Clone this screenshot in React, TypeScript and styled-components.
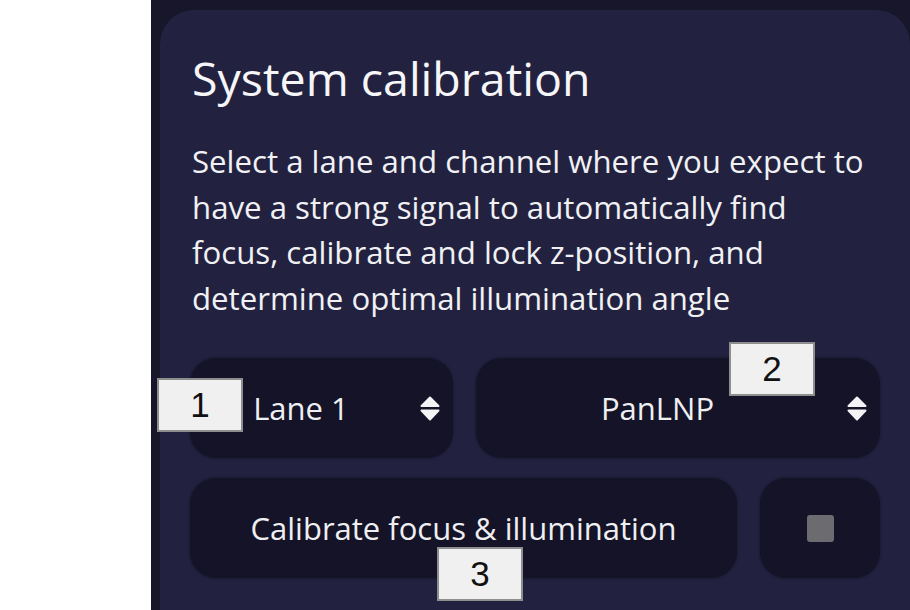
import React from "react";
import styled, { createGlobalStyle } from "styled-components";

const GlobalStyle = createGlobalStyle`
  html, body {
    margin: 0;
    padding: 0;
    background: #ffffff;
  }
  body {
    font-family: "Open Sans", "Noto Sans", sans-serif;
  }
`;

const Page = styled.div`
  position: relative;
  width: 910px;
  height: 610px;
  overflow: hidden;
  background: #ffffff;
`;

const Frame = styled.div`
  margin-left: 151px;
  height: 610px;
  box-sizing: border-box;
  padding: 10px 0 0 9px;
  background: #17162b;
  overflow: hidden;
`;

const Card = styled.section`
  width: 750px;
  height: 640px;
  box-sizing: border-box;
  padding: 40px 30px 0 30px;
  border-radius: 34px;
  background: #222240;
  color: #f1f1f4;
  display: flex;
  flex-direction: column;
`;

const Title = styled.h2`
  margin: 0 0 0 2px;
  font-size: 46.5px;
  font-weight: 400;
  line-height: 56px;
  color: #f6f6f8;
`;

const Description = styled.p`
  margin: 33px 0 0 2px;
  font-size: 31.2px;
  line-height: 45.5px;
  white-space: nowrap;
`;

const Row = styled.div<{ $columns: string }>`
  display: grid;
  grid-template-columns: ${(p) => p.$columns};
  column-gap: 23px;
  height: 100px;
  margin-top: 20px;

  &:first-of-type {
    margin-top: 0;
  }
`;

const Controls = styled.div`
  margin-top: 37px;
  display: flex;
  flex-direction: column;
`;

const Control = styled.div`
  display: flex;
  align-items: center;
  justify-content: center;
  border-radius: 26px;
  background: #141327;
  box-shadow: 0 0 3px rgba(10, 10, 25, 0.6);
  font-size: 31px;
  color: #efeff2;
`;

const Select = styled(Control)`
  padding-right: 13px;
  gap: 8px;
`;

const SelectValue = styled.span`
  flex: 1;
  text-align: center;
`;

const StopSquare = styled.span`
  width: 27px;
  height: 27px;
  border-radius: 3px;
  background: #6c6c70;
`;

const Marker = styled.div<{ $x: number; $y: number }>`
  position: absolute;
  left: ${(p) => p.$x}px;
  top: ${(p) => p.$y}px;
  width: 86px;
  height: 54px;
  box-sizing: border-box;
  border: 2px solid #8e8e8e;
  background: #f0f0f0;
  display: flex;
  align-items: center;
  justify-content: center;
  font-family: "Liberation Sans", Arial, sans-serif;
  font-size: 35px;
  color: #111111;
`;

const SortIcon = () => (
  <svg width="20" height="25" viewBox="0 0 20 25" fill="#f4f4f6" stroke="#f4f4f6" strokeWidth="2" strokeLinejoin="round">
    <path d="M10 1.5 L18.5 10 H1.5 Z" />
    <path d="M1.5 14.5 H18.5 L10 23.5 Z" />
  </svg>
);

const Dropdown = ({ value }: { value: string }) => (
  <Select>
    <SelectValue>{value}</SelectValue>
    <SortIcon />
  </Select>
);

export default function App() {
  return (
    <Page>
      <GlobalStyle />
      <Frame>
        <Card>
          <Title>System calibration</Title>
          <Description>
            Select a lane and channel where you expect to
            <br />
            have a strong signal to automatically find
            <br />
            focus, calibrate and lock z-position, and
            <br />
            determine optimal illumination angle
          </Description>
          <Controls>
            <Row $columns="263px 1fr">
              <Dropdown value="Lane 1" />
              <Dropdown value="PanLNP" />
            </Row>
            <Row $columns="1fr 120px">
              <Control>Calibrate focus &amp; illumination</Control>
              <Control>
                <StopSquare />
              </Control>
            </Row>
          </Controls>
        </Card>
      </Frame>
      <Marker $x={157} $y={378}>1</Marker>
      <Marker $x={729} $y={342}>2</Marker>
      <Marker $x={437} $y={547}>3</Marker>
    </Page>
  );
}
